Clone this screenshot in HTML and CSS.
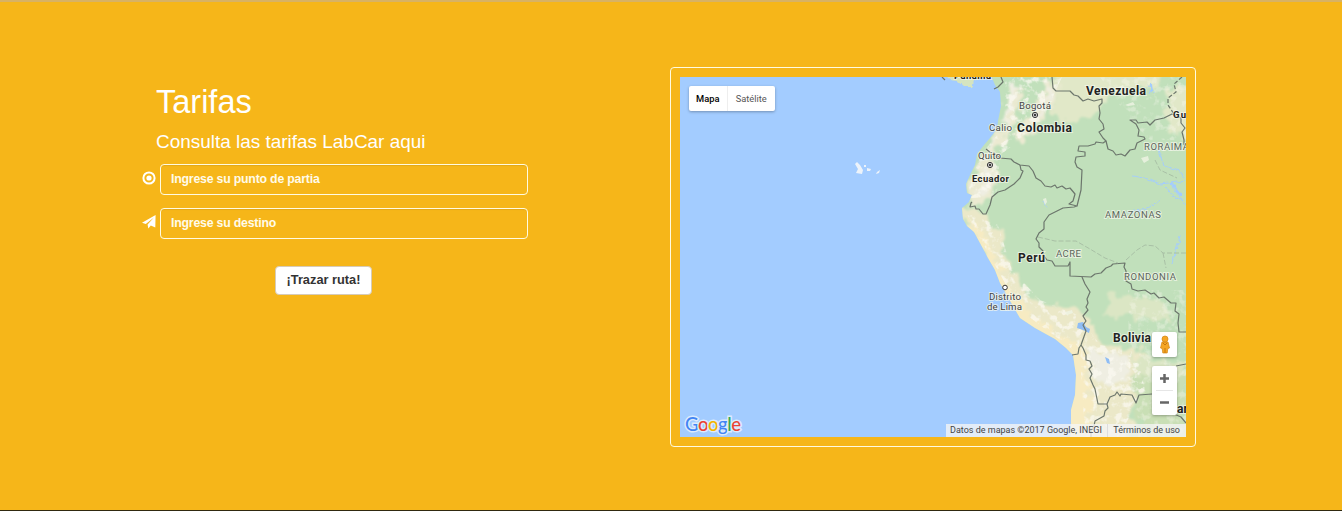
FILE: index.html
```html
<!DOCTYPE html>
<html lang="es">
<head>
<meta charset="utf-8">
<title>Tarifas</title>
<link rel="stylesheet" href="styles.css">
</head>
<body>
<main class="fares">
  <section class="quote">
    <h1 class="title">Tarifas</h1>
    <h2 class="subtitle">Consulta las tarifas LabCar aqui</h2>
    <form class="route">
      <div class="field">
        <svg class="icon" viewBox="0 0 14 14"><circle cx="7" cy="7" r="5.6" fill="none" stroke="#fff" stroke-width="2"/><circle cx="7" cy="7" r="2.6" fill="#fff"/></svg>
        <input class="input" type="text" placeholder="Ingrese su punto de partia">
      </div>
      <div class="field">
        <svg class="icon" viewBox="0 0 14 14"><path fill="#fff" d="M13.6 0 13.300 12.600 8.800 10.400 6.300 13.600 5.600 9.400 11.700 2.700 3.800 9 0 7.800Z"/></svg>
        <input class="input" type="text" placeholder="Ingrese su destino">
      </div>
      <button class="submit" type="button">¡Trazar ruta!</button>
    </form>
  </section>
  <section class="map-frame">
    <div class="map">
      <svg class="terrain" viewBox="680 77 506 360">
        <defs>
          <filter id="rough" x="-5%" y="-5%" width="110%" height="110%"><feTurbulence type="fractalNoise" baseFrequency=".18" numOctaves="2" seed="4"/><feDisplacementMap in="SourceGraphic" scale="5" xChannelSelector="R" yChannelSelector="G"/></filter>
          <filter id="relief" x="-10%" y="-10%" width="120%" height="120%"><feTurbulence type="fractalNoise" baseFrequency=".1" numOctaves="3" seed="8" result="n"/><feDisplacementMap in="SourceGraphic" in2="n" scale="20" xChannelSelector="R" yChannelSelector="G"/><feGaussianBlur stdDeviation="1"/></filter>
          <filter id="grain" x="0" y="0" width="100%" height="100%"><feTurbulence type="fractalNoise" baseFrequency=".13" numOctaves="3" seed="12"/><feColorMatrix values="0 0 0 0 .96  0 0 0 0 .95  0 0 0 0 .88  5 0 0 0 -2.5"/><feComposite in2="SourceGraphic" operator="in"/></filter>
          <path id="land" d="M989 70 995 85 1000 92 1001 106 998 121 997 129 990 138 984 145 977 154 975 165 970 175 966 184 967 193 972 195 969 202 962 208 963 219 967 226 974 232 980 243 988 258 995 270 1000 283 1008 297 1013 306 1020 318 1035 328 1055 339 1066 348 1073 355 1076 375 1075 395 1071 410 1071 425 1070 445H1195V70Z"/>
          <clipPath id="coast"><use href="#land"/></clipPath>
        </defs>
        <path fill="#a3ccff" d="M680 77h506v360H680z"/>
        <path fill="#d5e4c0" filter="url(#rough)" d="M945 72 949 80 957 81 964 87 972 87 974 81 982 77 986 72Z"/>
        <use href="#land" fill="#c1e0bb"/>
        <g clip-path="url(#coast)">
          <g filter="url(#relief)">
            <path fill="#e1e8c8" d="M1052 70H1166L1158 84 1120 90 1103 100 1098 114 1062 124 1050 110 1058 94ZM1170 90 1190 80V140L1165 128Z"/>
            <path fill="#ebead1" d="M1010 85 1022 90 1020 112 1012 128 1004 142 988 158 997 172 988 198 974 208 964 190 986 150 1004 128ZM1048 80 1060 90 1050 108 1036 128 1020 142 1015 138 1034 108Z"/>
            <path fill="#ebe8c8" d="M955 202 978 214 1000 230 1006 260 1018 278 1032 300 1076 308 1092 320 1100 345 1140 350 1152 362 1134 378 1130 445H1050L1068 365 1010 320Z"/>
            <path fill="#dbe6c4" d="M1110 295 1160 300 1175 325 1145 318 1120 316 1102 315ZM1132 355 1186 366V395L1140 390Z"/>
            <path fill="#c9dfb5" d="M1130 378 1186 374V437H1142Z"/>
            <path fill="#efeee2" d="M1012 84 1018 88 1014 105 1009 120 998 130 994 148 985 151 1003 126ZM1048 84 1054 92 1038 120 1028 128 1045 98ZM985 170 995 173 986 193 979 195ZM1083 345 1104 351 1128 358 1130 374 1112 387 1097 383Z"/>
            <path fill="#f7ebc2" d="M964 218 975 223 989 245 1003 275 1022 306 1051 328 1077 345 1087 365 1092 400 1088 440H1065L1070 360 1015 324Z"/>
          </g>
          <path filter="url(#grain)" opacity=".75" d="M1005 77H1062L1040 125 1000 155 997 197 970 198 968 180 985 150 1005 125ZM966 213 998 225 1012 270 1040 300 1078 315 1100 345 1136 351 1145 390 1118 437H1085L1080 355 1020 310Z"/>
          <path filter="url(#grain)" opacity=".35" d="M1100 77H1186V140H1150L1130 120ZM1128 290H1186V437H1130Z"/>
        </g>
        <g fill="none" stroke="#a3ccff" stroke-width=".9" filter="url(#rough)">
          <path d="M1148 84 1151 88 1149 94M1150 84 1154 93M1133 176 1145 178 1160 184 1186 181M1158 149 1164 166 1178 170 1184 178M1166 187 1174 197 1181 200M1043 201 1046 207M1172 187 1186 205M1128 212 1148 209 1160 199M1172 264 1180 236"/>
          <path stroke-width="2" d="M1170 182 1182 196M1151 83 1152 91"/>
        </g>
        <path fill="#8fbdf5" d="m1078 323 5-1 3 5 4 2-1 4-6-3-6-2ZM1105 357l4 2 1 5-3-1Z"/>
        <path fill="#eff4e5" opacity=".8" d="m1141 158 7-2 1 4-5 3ZM1125 105l8-3 2 3-7 1ZM1043 199l3-1 1 4-2 3ZM1118 87l5-2 2 4-5 1ZM1065 312l7-2 1 3-6 2Z"/>
        <g class="border">
          <path d="M1001 77 1003 82 998 87 994 89M1052 77 1053 88 1056 91 1070 91 1074 95 1078 96 1083 101 1088 99 1094 101 1102 99 1102 103 1099 106 1100 113 1099 119 1103 124 1104 129 1099 132 1103 138 1106 141 1103 143 1096 142 1095 144 1088 146H1079L1078 151 1085 152V156L1076 157 1075 162 1077 167 1082 170 1081 190 1077 206"/>
          <path d="M1106 141 1108 149 1113 151 1116 155 1121 154 1125 156 1130 150 1135 149 1137 143 1145 139 1144 137 1138 136 1139 130 1136 124 1130 120 1136 120 1138 123 1147 122 1150 125 1155 120 1164 118 1172 114 1181 118 1181 123 1185 128 1182 132 1184 140 1184 145"/>
          <path d="M986 149 991 153 994 153 1000 158 1011 159 1014 162 1020 165 1029 166 1033 171 1036 178 1041 181 1045 186 1051 187 1055 185 1057 188 1062 186 1066 189 1070 188 1075 194 1073 201 1069 204 1077 206 1074 207 1063 208 1057 211 1049 215 1044 222 1044 229 1039 233 1036 239 1039 243V247L1043 251 1044 256 1047 260 1052 261 1055 266 1068 266 1070 262V276L1091 277 1095 274 1101 273 1106 268 1111 266 1113 264 1125 263 1124 267 1126 271V281L1131 284 1132 289 1138 291 1145 290 1151 294 1154 293 1159 298 1164 297 1171 303 1176 303 1175 311 1179 314 1178 323 1179 332 1186 332"/>
          <path d="M1020 165 1021 170 1023 171 1020 178 1014 184 1005 190 998 192 992 197 990 205 986 214 983 214 979 209 976 209 975 206 970 207 971 203 972 202M1082 277 1085 284 1090 292 1087 299 1088 303 1086 307 1088 310 1083 316 1086 321 1083 325 1086 331 1081 345 1079 348 1078 354 1072 355M1081 345 1083 348 1086 355 1086 360 1090 361 1092 366 1089 369 1092 374 1090 378 1093 385 1095 389 1098 404H1107L1110 397 1115 395 1117 392 1120 396 1121 394 1132 395 1136 403 1139 395 1152 394M1107 404 1108 408 1105 411 1104 416 1095 421 1094 426 1091 430V437M1176 366 1186 364M1174 414 1181 417 1186 423M942 77 945 80"/>
          <path class="faint" d="M1182 77 1174 84 1176 92 1168 98 1168 105 1174 114"/>
          <path class="state" d="M1038 237 1055 241H1076L1090 249 1105 258 1118 263M1126 260 1137 250 1145 245 1155 246 1163 253H1186M1163 253 1166 268M1155 160 1160 170 1177 178"/>
        </g>
        <path fill="#edf3fa" d="m855 164 2-2 3 3 3 5-1 4-6-1 2-4Zm9 1 2 0v2h-2Zm3 3 4 1-1 2h-3Zm10 4 3-2-1 3-3 1Z"/>
        <g class="label">
          <text class="country small" x="954" y="79" textLength="37">Panamá</text>
          <text class="country" x="1086" y="95" textLength="60">Venezuela</text>
          <text class="country" x="1017" y="132" textLength="55">Colombia</text>
          <text class="country small" x="972" y="182" textLength="37">Ecuador</text>
          <text class="country" x="1018" y="262" textLength="27">Perú</text>
          <text class="country" x="1113" y="342" textLength="38">Bolivia</text>
          <text class="country small" x="1173" y="118" textLength="13">Gu</text>
          <text class="country" x="1177" y="413">ar</text>
          <text x="1019" y="109" textLength="32">Bogotá</text>
          <text x="989" y="131" textLength="23">Calio</text>
          <text x="978" y="159" textLength="23">Quito</text>
          <text x="989" y="300" textLength="32">Distrito</text>
          <text x="987" y="310" textLength="35">de Lima</text>
          <text class="region" x="1144" y="150" textLength="45">RORAIMA</text>
          <text class="region" x="1105" y="218" textLength="56">AMAZONAS</text>
          <text class="region" x="1056" y="257" textLength="25">ACRE</text>
          <text class="region" x="1124" y="280" textLength="52">RONDONIA</text>
        </g>
        <g fill="#fff" stroke="#333">
          <circle cx="1035" cy="115" r="2.6"/><circle cx="990" cy="165" r="2.6"/><circle cx="1005" cy="287.500" r="2.3"/>
          <circle cx="1035" cy="115" r="1" fill="#222"/><circle cx="990" cy="165" r="1" fill="#222"/>
        </g>
        <text class="brand" x="685" y="431" textLength="56"><tspan fill="#4285f4">G</tspan><tspan fill="#ea4335">o</tspan><tspan fill="#f4b400">o</tspan><tspan fill="#4285f4">g</tspan><tspan fill="#34a853">l</tspan><tspan fill="#ea4335">e</tspan></text>
      </svg>
      <div class="map-type"><span class="type active">Mapa</span><span class="type">Satélite</span></div>
      <div class="controls">
        <div class="pegman"><svg viewBox="0 0 12 20" width="12" height="20"><g fill="#f5a623" stroke="#d18414" stroke-width=".7"><path d="M3 7h6l1.500 6-1.700.6L8.200 18H3.800l-.6-4.400L1.500 13Z"/><circle cx="6" cy="4" r="3"/></g><path d="M4 8l2 2 2-2M6 13v5" fill="none" stroke="#c87810"/></svg></div>
        <div class="zoom">
          <svg class="zoom-icon" viewBox="0 0 9 9"><path d="M0 4.500h9M4.500 0v9"/></svg>
          <svg class="zoom-icon" viewBox="0 0 9 9"><path d="M0 4.500h9"/></svg>
        </div>
      </div>
      <div class="credits"><span>Datos de mapas ©2017 Google, INEGI</span><span class="terms">Términos de uso</span></div>
    </div>
  </section>
</main>
</body>
</html>
```
FILE: styles.css
```css
* { box-sizing: border-box; }
body { margin: 0; font-family: "Liberation Sans", Arial, sans-serif; }
.fares { display: flex; align-items: flex-start; height: 511px; padding: 65px 146px 0 142px; justify-content: space-between; background: #f6b619; border-top: 2px solid #d8b263; border-bottom: 1px solid #30290f; color: #fff; }
.quote { width: 386px; padding-top: 17px; }
.title { margin: 0 0 0 14px; font-size: 32.500px; line-height: 36px; font-weight: 400; }
.subtitle { margin: 11px 0 11px 14px; font-size: 18.950px; line-height: 22px; font-weight: 400; white-space: nowrap; }
.field { display: flex; gap: 4px; margin-bottom: 13px; }
.icon { width: 14px; height: 14px; margin-top: 7px; }
.input { width: 368px; height: 31px; padding: 0 10px 2px; background: transparent; border: 1px solid #fffbe1; border-radius: 4px; box-shadow: inset 0 1px 1px rgba(0,0,0,.075); font: 700 12.3px "Liberation Sans", Arial, sans-serif; letter-spacing: -.2px; }
.input::placeholder { color: #fffbe9; opacity: 1; }
.submit { display: block; width: 97px; height: 29px; margin: 27px 0 0 133px; padding: 0 0 2px; background: #fff; border: 1px solid #d6cbb8; border-radius: 4px; color: #333; font: 700 12.800px "Liberation Sans", Arial, sans-serif; white-space: nowrap; }
.map-frame { width: 526px; height: 380px; padding: 9px; border: 1px solid #fffbe0; border-radius: 4px; }
.map { position: relative; width: 506px; height: 360px; overflow: hidden; font-family: Roboto, sans-serif; }
.terrain { display: block; width: 506px; height: 360px; }
.border { fill: none; stroke: #6c766c; stroke-width: 1.2; stroke-linejoin: round; }
.faint { stroke-dasharray: 4 2; }
.state { stroke: #a2b7a0; stroke-width: .8; stroke-dasharray: 5 2; }
.label { font: 9.700px Roboto, sans-serif; fill: #444; stroke: #f5f8ed; stroke-width: 2px; stroke-opacity: .7; paint-order: stroke; }
.country { font-size: 12px; font-weight: 700; fill: #222; }
.small { font-size: 9.500px; }
.region { font-size: 9.500px; fill: #5c665b; }
.brand { font: 500 18.500px Lato, sans-serif; stroke: #dcebfd; stroke-width: 3px; paint-order: stroke; }
.map-type { position: absolute; left: 9px; top: 9px; display: flex; width: 86px; height: 25px; background: #fff; border-radius: 2px; box-shadow: 0 1px 3px rgba(0,0,0,.3); font-size: 9.300px; line-height: 25px; }
.type { width: 48px; text-align: center; color: #565656; }
.type.active { width: 39px; color: #000; font-weight: 500; border-right: 1px solid #eee; }
.controls { position: absolute; right: 9px; top: 255px; display: grid; gap: 9px; }
.pegman, .zoom { width: 25px; background: #fff; border-radius: 2px; box-shadow: 0 1px 3px rgba(0,0,0,.3); }
.pegman { display: flex; height: 25px; align-items: center; justify-content: center; }
.zoom { display: grid; height: 49px; grid-template-rows: 1fr 1fr; place-items: center; background: linear-gradient(#e6e6e6, #e6e6e6) center / 17px 1px no-repeat #fff; }
.zoom-icon { width: 9px; height: 9px; stroke: #666; stroke-width: 2.500; }
.credits { position: absolute; right: 0; bottom: 0; display: flex; justify-content: space-between; width: 240px; height: 13px; padding: 0 6px 0 4px; background: rgba(245,245,245,.78); color: #444; font-size: 9px; line-height: 13px; white-space: nowrap; }
.terms { padding-left: 5px; border-left: 1px solid #ddd; }
```
